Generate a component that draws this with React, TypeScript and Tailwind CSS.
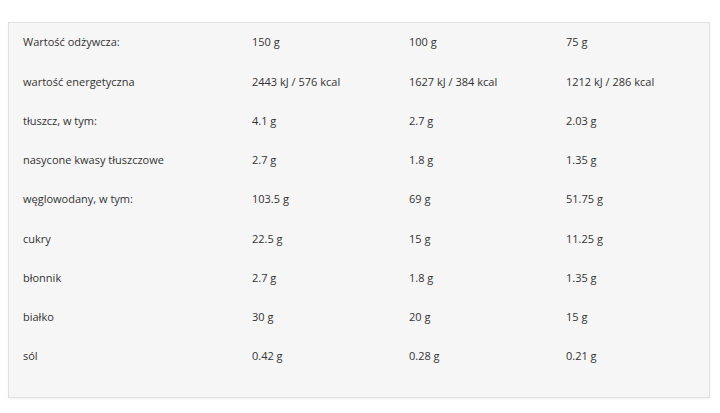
const rows: [string, string, string, string][] = [
  ['Wartość odżywcza:', '150 g', '100 g', '75 g'],
  ['wartość energetyczna', '2443 kJ / 576 kcal', '1627 kJ / 384 kcal', '1212 kJ / 286 kcal'],
  ['tłuszcz, w tym:', '4.1 g', '2.7 g', '2.03 g'],
  ['nasycone kwasy tłuszczowe', '2.7 g', '1.8 g', '1.35 g'],
  ['węglowodany, w tym:', '103.5 g', '69 g', '51.75 g'],
  ['cukry', '22.5 g', '15 g', '11.25 g'],
  ['błonnik', '2.7 g', '1.8 g', '1.35 g'],
  ['białko', '30 g', '20 g', '15 g'],
  ['sól', '0.42 g', '0.28 g', '0.21 g'],
]

export default function App() {
  return (
    <div className="h-[413px] w-[720px] bg-white pt-[22px] pl-[8px] font-['Open_Sans',sans-serif] text-[11px] text-[#333]">
      <div className="w-[702px] border border-[#e0e0e0] bg-[#f6f6f6] pb-[21px] pl-[14px] shadow-[0_1px_2px_rgba(0,0,0,0.06)]">
        {rows.map((row, i) => (
          <div className="flex h-[39.25px] items-center" key={i}>
            <div className="w-[229px]">{row[0]}</div>
            <div className="w-[157px]">{row[1]}</div>
            <div className="w-[157px]">{row[2]}</div>
            <div>{row[3]}</div>
          </div>
        ))}
      </div>
    </div>
  )
}
